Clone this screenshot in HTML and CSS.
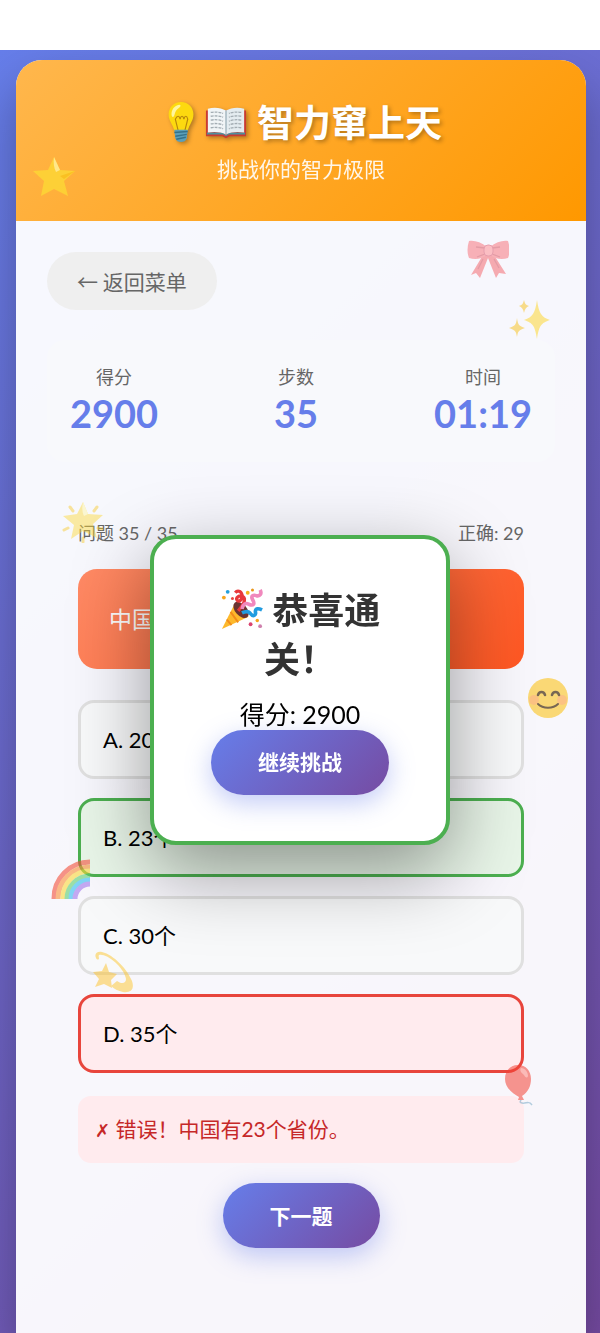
FILE: index.html
```html
<!DOCTYPE html>
<html lang="zh-CN">
<head>
    <meta charset="UTF-8">
    <meta name="viewport" content="width=device-width, initial-scale=1.0">
    <title>智力窜上天</title>
    <link rel="stylesheet" href="styles.css">
</head>
<body>
    <div class="page">
        <main class="container">
            <header class="header">
                <h1>
                    <svg class="title-icon" viewBox="0 0 44 44" aria-hidden="true">
                        <path d="M21 1C13 1 8 7 8 14c0 7 4 10 6 17h14c2-7 6-10 6-17C34 7 29 1 21 1z" fill="#fdd90f"/>
                        <path d="M18 31l-3-12c2-4 4-4 5 0 1-4 3-4 4 0 1-4 3-4 4 0l-3 12" fill="none" stroke="#b7860b" stroke-width="1.2"/>
                        <path d="M11 14c0-5 3-9 8-10 2 0 2 2 0 3-3 2-4 4-5 8-1 3-3 2-3-1z" fill="#fff59d"/>
                        <path d="M14 30h14l-1 9c-1 3-3 4-6 4s-5-1-6-4z" fill="#5b9fb8"/>
                        <path d="M14 33l14-1M15 37l12-2M16 40l10-2" stroke="#34728a" stroke-width="1.5"/>
                    </svg><svg class="title-icon" viewBox="0 0 44 44" aria-hidden="true">
                        <path d="M1 10h42v27H26l-4 2-4-2H1z" fill="#c93b32"/>
                        <path d="M2 33h17l3 3 3-3h17v2H25l-3 2-3-2H2z" fill="#4b8f9c"/>
                        <path d="M3 8c7-2 14-1 19 2v25c-6-3-13-3-19-2z" fill="#f1f5f7"/>
                        <path d="M41 8c-7-2-14-1-19 2v25c6-3 13-3 19-2z" fill="#e4ecf0"/>
                        <path d="M22 10v25" stroke="#9db0ba" stroke-width="1.4"/>
                        <path d="M6 12c5-1 10 0 13 1M6 16c5-1 10 0 13 1M6 20c5-1 10 0 13 1M6 24c5-1 10 0 13 1M6 28c5-1 10 0 13 1M38 12c-5-1-10 0-13 1M38 16c-5-1-10 0-13 1M38 20c-5-1-10 0-13 1M38 24c-5-1-10 0-13 1M38 28c-5-1-10 0-13 1" fill="none" stroke="#a3adb3" stroke-width="1.4" stroke-dasharray="3 1"/>
                    </svg>
                    智力窜上天
                </h1>
                <p>挑战你的智力极限</p>
            </header>

            <div class="content">
                <button class="back-btn" type="button">← 返回菜单</button>

                <div class="stats">
                    <div class="stat">
                        <div class="stat-label">得分</div>
                        <div class="stat-value">2900</div>
                    </div>
                    <div class="stat">
                        <div class="stat-label">步数</div>
                        <div class="stat-value">35</div>
                    </div>
                    <div class="stat">
                        <div class="stat-label">时间</div>
                        <div class="stat-value">01:19</div>
                    </div>
                </div>

                <section class="quiz">
                    <div class="progress">
                        <span>问题 35 / 35</span>
                        <span>正确: 29</span>
                    </div>
                    <div class="question">中国有多少个省份？</div>
                    <div class="options">
                        <button class="option" type="button">A. 20个</button>
                        <button class="option correct" type="button">B. 23个</button>
                        <button class="option" type="button">C. 30个</button>
                        <button class="option wrong" type="button">D. 35个</button>
                    </div>
                    <div class="feedback"><span class="mark">✗</span> 错误！中国有23个省份。</div>
                    <button class="btn" type="button">下一题</button>
                </section>
            </div>
        </main>

        <!-- 漂浮装饰 -->
        <div class="decorations" aria-hidden="true">
            <svg class="deco star" viewBox="0 0 42 42">
                <path d="M21 1l6 13 15 1-11 10 4 15-14-7-13 7 3-15L0 15l15-1z" fill="#fdd835"/>
                <path d="M21 1l6 13-4 2c-2-4-3-9-2-15z" fill="#fff59d"/>
                <path d="M42 15L31 23l-4-3z" fill="#f9c51c"/>
            </svg>
            <svg class="deco bow" viewBox="0 0 42 42">
                <path d="M16 16L4 36l5-2 4 5 8-20 8 20 3-5 7 1-12-19z" fill="#f46c72"/>
                <path d="M20 8C14 3 7 1 2 2 0 8 0 14 2 19c6 2 13 1 18-3zM23 8c6-5 13-7 18-6 2 6 2 12 0 17-6 2-13 1-18-3z" fill="#f7777f"/>
                <path d="M18 9L9 8M18 15l-8 3M25 9l8-1M25 15l8 3M16 20l-5 10M27 20l5 9" stroke="#d4525f" stroke-width="1.3"/>
                <rect x="17" y="6" width="9" height="11" rx="4" fill="#ff9095" stroke="#d9566c"/>
            </svg>
            <svg class="deco sparkles" viewBox="0 0 42 42">
                <path d="M28 1c2 13 4 17 13 20-9 3-11 6-13 19-2-13-4-16-13-19 9-3 11-7 13-20z" fill="#fdd835"/>
                <path d="M8 19c1 7 2 8 8 10-6 2-7 3-8 9-1-6-2-7-8-9 6-2 7-3 8-10zM15 1c1 4 2 5 5 6-3 1-4 3-5 7-1-4-2-6-5-7 3-1 4-2 5-6z" fill="#f8c52c"/>
            </svg>
            <svg class="deco glow" viewBox="0 0 42 42">
                <path d="M21 1l5 12 15 1-10 9 4 14-14-7-12 8 3-14L1 15l14-2z" fill="#fdd835"/>
                <path d="M21 1l5 12-4 2c-2-4-2-9-1-14z" fill="#fff59d"/>
                <path d="M8 6l3 4M35 6l-3 4M2 29l4-2M40 28l-4-1M21 37v4" stroke="#f7c928" stroke-width="3" stroke-linecap="round"/>
            </svg>
            <svg class="deco smile" viewBox="0 0 42 42">
                <circle cx="21" cy="21" r="20" fill="#fccb3d"/>
                <circle cx="7" cy="23" r="5" fill="#ff9064" opacity=".5"/>
                <circle cx="35" cy="23" r="5" fill="#ff9064" opacity=".5"/>
                <path d="M11 18c1-4 6-4 7 0M25 18c1-4 6-4 7 0" fill="none" stroke="#422b0d" stroke-width="2.6" stroke-linecap="round"/>
                <path d="M11 27c5 5 15 5 20 0" fill="none" stroke="#422b0d" stroke-width="2" stroke-linecap="round"/>
            </svg>
            <svg class="deco rainbow" viewBox="0 0 42 42">
                <g fill="none" stroke-width="5">
                    <path d="M4 41A36 36 0 0 1 40 4" stroke="#f4503b"/>
                    <path d="M8 41A32 32 0 0 1 40 9" stroke="#fb9138"/>
                    <path d="M13 41A27 27 0 0 1 40 13" stroke="#fbd83b"/>
                    <path d="M17 41A23 23 0 0 1 40 18" stroke="#5fcf70"/>
                    <path d="M21 41A19 19 0 0 1 40 22" stroke="#31bdf0"/>
                    <path d="M25 41A15 15 0 0 1 40 26" stroke="#a076ed"/>
                </g>
            </svg>
            <svg class="deco dizzy" viewBox="0 0 42 42">
                <path d="M4 7C2 3 5 0 10 1c12 3 25 17 30 29 3 9-2 12-9 11-5-1-9-3-12-6l6-5c4 3 9 3 9-2C33 19 19 5 10 4 7 3 6 4 7 7c0 2-2 2-3 0z" fill="#fcc62f"/>
                <path d="M14 12l3 9 8 2-6 6 1 8-8-4-9 3 4-8-6-7 9-1z" fill="#fdc22d"/>
            </svg>
            <svg class="deco balloon" viewBox="0 0 42 42">
                <path d="M21 33c1 3-3 4 1 5s7-3 10 2" fill="none" stroke="#7aabc8" stroke-width="1.5"/>
                <path d="M18 0C10 0 5 6 5 14c0 9 8 15 14 18l-1 3h6l-2-4c6-4 9-10 9-17C31 6 26 0 18 0z" fill="#f44336"/>
                <path d="M21 3c4 0 7 4 7 8-1 3-3 1-4-1-2-2-5-4-3-7z" fill="#ff8a80"/>
            </svg>
        </div>
    </div>

    <div class="modal-layer">
        <div class="modal" role="dialog" aria-labelledby="modalTitle">
            <h2 id="modalTitle">
                <svg class="title-icon" viewBox="0 0 44 44" aria-hidden="true">
                    <path d="M14 17L1 43l28-13z" fill="#fdb92c"/>
                    <path d="M10 25l8 11M6 33l5 6" stroke="#f28c1b" stroke-width="2"/>
                    <ellipse cx="21" cy="23" rx="6" ry="10" transform="rotate(-42 21 23)" fill="#6b3330"/>
                    <path d="M18 24c5-6 9-12 5-15-4-2-8 1-6 4 2 2 6-1 5-6-1-4-5-5-7-2" fill="none" stroke="#e8383b" stroke-width="3.4"/>
                    <path d="M22 22c1-5 4-7 7-5 5 2 7 0 4-5-2-4 1-5 4-4 4 1 6-2 4-6" fill="none" stroke="#f088bd" stroke-width="3.8"/>
                    <path d="M22 26c4-2 7-2 9 1 3 4 6 1 5-2 0-4 3-4 7-2" fill="none" stroke="#219ce0" stroke-width="3.8"/>
                    <circle cx="7" cy="4" r="2" fill="#24a0dc"/>
                    <circle cx="3" cy="10" r="2" fill="#f6a51c"/>
                    <circle cx="12" cy="11" r="1.6" fill="#e84842"/>
                    <circle cx="28" cy="5" r="2" fill="#f6b51c"/>
                    <circle cx="33" cy="2" r="1.6" fill="#e9961b"/>
                    <circle cx="31" cy="38" r="2" fill="#da4470"/>
                    <circle cx="38" cy="34" r="1.8" fill="#f6a51c"/>
                    <circle cx="41" cy="40" r="2" fill="#cf80ad"/>
                </svg>
                恭喜通关！
            </h2>
            <p>得分: 2900</p>
            <button class="btn" type="button">继续挑战</button>
        </div>
    </div>
</body>
</html>
```
FILE: styles.css
```css
* {
    box-sizing: border-box;
    margin: 0;
    padding: 0;
}
body {
    font-family: Lato, "Noto Sans CJK SC", sans-serif;
    font-size: 21px;
    line-height: 28px;
    background: #fff;
    color: #000;
}
button {
    font: inherit;
    border: none;
    cursor: pointer;
}
.page {
    position: relative;
    display: flex;
    margin-top: 50px;
    min-height: calc(100vh - 50px);
    padding: 10px 14px 0 16px;
    background: linear-gradient(135deg, #667eea 0%, #764ba2 100%);
    overflow: hidden;
}
.container {
    flex: 1;
    background: rgba(255, 255, 255, 0.95);
    border-radius: 26px 26px 0 0;
    box-shadow: 0 26px 52px rgba(0, 0, 0, 0.3);
    overflow: hidden;
}

/* 顶部标题 */
.header {
    padding: 38px 20px;
    background: linear-gradient(135deg, #ffb74d 0%, #ff9800 100%);
    color: #fff;
    text-align: center;
}
.header h1 {
    margin-bottom: 7px;
    font-size: 37px;
    line-height: 50px;
    text-shadow: 2px 2px 4px rgba(0, 0, 0, 0.3);
}
.header p {
    opacity: 0.9;
}
.title-icon {
    width: 44px;
    height: 42px;
    vertical-align: -6px;
}
.header .title-icon {
    filter: drop-shadow(2px 2px 2px rgba(0, 0, 0, 0.3));
}
.content {
    padding: 31px;
}
.back-btn {
    display: block;
    height: 58px;
    margin-bottom: 30px;
    padding: 0 30px;
    border-radius: 29px;
    background: #efefef;
    color: #666;
    font-family: "Noto Sans CJK SC", sans-serif;
}

/* 统计信息 */
.stats {
    display: flex;
    justify-content: space-between;
    margin-bottom: 57px;
    padding: 23px 23px 27px;
    border-radius: 18px;
    background: #f8f9fc;
    text-align: center;
}
.stat-label {
    color: #666;
    font-size: 18px;
}
.stat-value {
    color: #667eea;
    font-size: 38px;
    font-weight: bold;
    line-height: 44px;
}

/* 答题区 */
.quiz {
    padding: 0 31px;
}
.progress {
    display: flex;
    justify-content: space-between;
    margin-bottom: 22px;
    color: #666;
    font-size: 18px;
}
.question {
    margin-bottom: 31px;
    padding: 36px 31px;
    border-radius: 19px;
    background: linear-gradient(135deg, #ff8a65 0%, #ff5722 100%);
    color: #fff;
    font-size: 23px;
}
.options {
    display: grid;
    gap: 19px;
}
.option {
    height: 79px;
    padding: 0 22px;
    border: 3px solid #e0e0e0;
    border-radius: 16px;
    background: #f8f9fa;
    color: #000;
    font-size: 22px;
    text-align: left;
}
.option.correct {
    border-color: #4caf50;
    background: #e8f5e8;
}
.option.wrong {
    border-color: #e8453c;
    background: #ffebee;
}
.feedback {
    margin: 23px 0 20px;
    padding: 19px 17px;
    border-radius: 13px;
    background: #ffebee;
    color: #c62828;
}
.mark {
    font-size: 18px;
}
.btn {
    display: block;
    height: 65px;
    margin: 0 auto;
    padding: 0 47px;
    border-radius: 33px;
    background: linear-gradient(135deg, #667eea 0%, #764ba2 100%);
    box-shadow: 0 8px 26px rgba(102, 126, 234, 0.4);
    color: #fff;
    font-weight: bold;
}

/* 通关弹窗 */
.modal-layer {
    position: fixed;
    inset: 46px 0 0;
    display: flex;
    align-items: center;
    justify-content: center;
}
.modal {
    width: 50%;
    min-width: 299px;
    padding: 47px 52px 46px;
    border: 4px solid #4caf50;
    border-radius: 26px;
    background: #fff;
    box-shadow: 0 26px 78px rgba(0, 0, 0, 0.4);
    text-align: center;
}
.modal h2 {
    margin-bottom: 14px;
    color: #333;
    font-size: 36px;
    line-height: 49px;
}
.modal p {
    font-size: 25px;
    line-height: 32px;
}

/* 漂浮的小图标，盖在卡片上面 */
.decorations {
    position: absolute;
    inset: 0;
    pointer-events: none;
}
.deco {
    position: absolute;
    width: 42px;
    height: 42px;
    opacity: 0.55;
}
.star {
    top: 106px;
    left: 33px;
    opacity: 0.8;
}
.bow {
    top: 189px;
    right: 91px;
}
.sparkles {
    top: 249px;
    right: 49px;
}
.glow {
    top: 451px;
    left: 62px;
    opacity: 0.45;
}
.smile {
    top: 627px;
    right: 31px;
    opacity: 0.7;
}
.rainbow {
    top: 808px;
    left: 50px;
    opacity: 0.6;
}
.dizzy {
    top: 901px;
    left: 92px;
    opacity: 0.5;
}
.balloon {
    top: 1015px;
    right: 58px;
}
```
